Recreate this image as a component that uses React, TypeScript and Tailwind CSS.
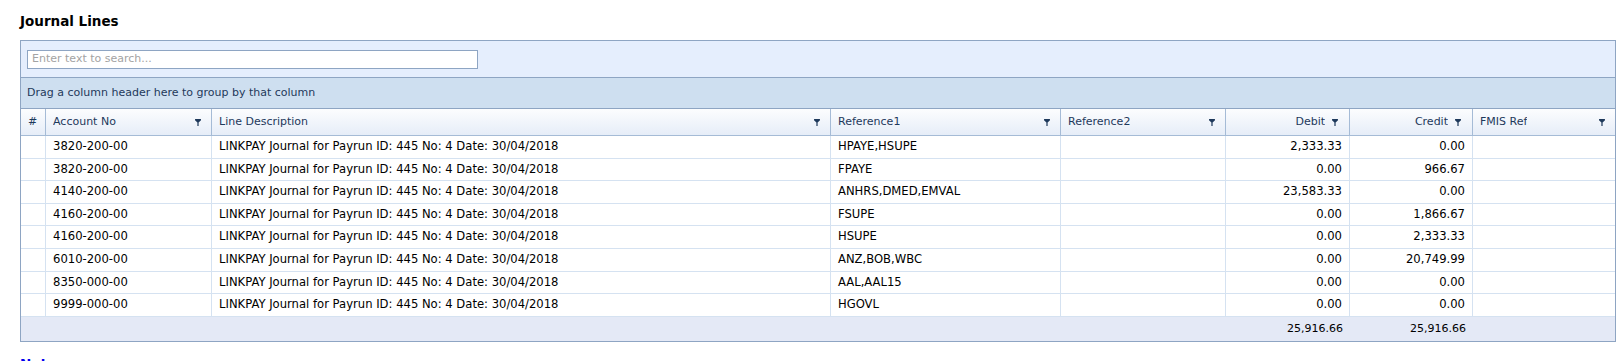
import React from "react";

const rows = [
  ["3820-200-00", "HPAYE,HSUPE", "2,333.33", "0.00"],
  ["3820-200-00", "FPAYE", "0.00", "966.67"],
  ["4140-200-00", "ANHRS,DMED,EMVAL", "23,583.33", "0.00"],
  ["4160-200-00", "FSUPE", "0.00", "1,866.67"],
  ["4160-200-00", "HSUPE", "0.00", "2,333.33"],
  ["6010-200-00", "ANZ,BOB,WBC", "0.00", "20,749.99"],
  ["8350-000-00", "AAL,AAL15", "0.00", "0.00"],
  ["9999-000-00", "HGOVL", "0.00", "0.00"],
];

const desc = "LINKPAY Journal for Payrun ID: 445 No: 4 Date: 30/04/2018";

function Funnel() {
  return (
    <svg width="6" height="7" viewBox="0 0 6 7" className="shrink-0">
      <path d="M0.3 0 H5.7 Q6 0 6 0.6 V1.2 L3.6 3.6 V7 H2.4 V3.6 L0 1.2 V0.6 Q0 0 0.3 0 Z" fill="#1e395b" />
    </svg>
  );
}

function HeadCell({ label, right, last }: { label: string; right?: boolean; last?: boolean }) {
  return (
    <th
      className={`h-[27px] p-0 font-normal border-b border-[#a5bbd6] ${last ? "" : "border-r"} bg-gradient-to-b from-[#fcfdfe] to-[#e6edf8]`}
    >
      <div className={`flex items-center pl-[7px] ${right ? "justify-end gap-[7px] pr-[11px]" : "justify-between pr-[10px]"}`}>
        <span className="truncate">{label}</span>
        <Funnel />
      </div>
    </th>
  );
}

const td = "p-0 border-r border-b border-[#d5e2f1] text-[11.6px]";

export default function App() {
  const font = { fontFamily: '"DejaVu Sans", Verdana, sans-serif' };
  return (
    <div className="w-[1623px] h-[361px] overflow-hidden bg-white text-[11px]" style={font}>
      <div className="pl-[20px] pt-[13px] h-[40px] text-[13.5px] font-bold text-black leading-[16px]">Journal Lines</div>
      <div className="ml-[20px] w-[1596px] border border-[#8ea5c3]">
        <div className="h-[37px] bg-[#e5eefd] border-b border-[#8ea5c3] flex items-center pl-[6px]">
          <div className="w-[451px] h-[19px] border border-[#8ea5c3] bg-white flex items-center pl-[4px] text-[#a3a3a3]">
            Enter text to search...
          </div>
        </div>
        <div className="h-[31px] bg-[#cedff0] border-b border-[#8ea5c3] flex items-center pl-[6px] text-[#1e395b]">
          Drag a column header here to group by that column
        </div>
        <table className="w-full table-fixed border-separate border-spacing-0">
          <colgroup>
            <col className="w-[25px]" />
            <col className="w-[166px]" />
            <col className="w-[619px]" />
            <col className="w-[230px]" />
            <col className="w-[165px]" />
            <col className="w-[124px]" />
            <col className="w-[123px]" />
            <col />
          </colgroup>
          <thead className="text-[#1e395b]">
            <tr>
              <th className="h-[27px] p-0 pl-[7px] font-normal text-left border-b border-r border-[#a5bbd6] bg-gradient-to-b from-[#fcfdfe] to-[#e6edf8]">#</th>
              <HeadCell label="Account No" />
              <HeadCell label="Line Description" />
              <HeadCell label="Reference1" />
              <HeadCell label="Reference2" />
              <HeadCell label="Debit" right />
              <HeadCell label="Credit" right />
              <HeadCell label="FMIS Ref" last />
            </tr>
          </thead>
          <tbody className="text-black">
            {rows.map((r, i) => (
              <tr key={i}>
                <td className={`${td} h-[22.6px]`}></td>
                <td className={`${td} pl-[7px]`}>{r[0]}</td>
                <td className={`${td} pl-[7px] whitespace-nowrap`}>{desc}</td>
                <td className={`${td} pl-[7px]`}>{r[1]}</td>
                <td className={td}></td>
                <td className={`${td} pr-[7px] text-right`}>{r[2]}</td>
                <td className={`${td} pr-[7px] text-right`}>{r[3]}</td>
                <td className="p-0 border-b border-[#d5e2f1]"></td>
              </tr>
            ))}
            <tr className="bg-[#e4e9f6]">
              <td className="h-[24px] p-0"></td>
              <td className="p-0"></td>
              <td className="p-0"></td>
              <td className="p-0"></td>
              <td className="p-0"></td>
              <td className="p-0 pr-[7px] text-right">25,916.66</td>
              <td className="p-0 pr-[7px] text-right">25,916.66</td>
              <td className="p-0"></td>
            </tr>
          </tbody>
        </table>
      </div>
      <div className="pl-[20px] pt-[14px] text-[13.5px] font-bold text-[#0000ee] leading-[16px]">Notes:</div>
    </div>
  );
}
